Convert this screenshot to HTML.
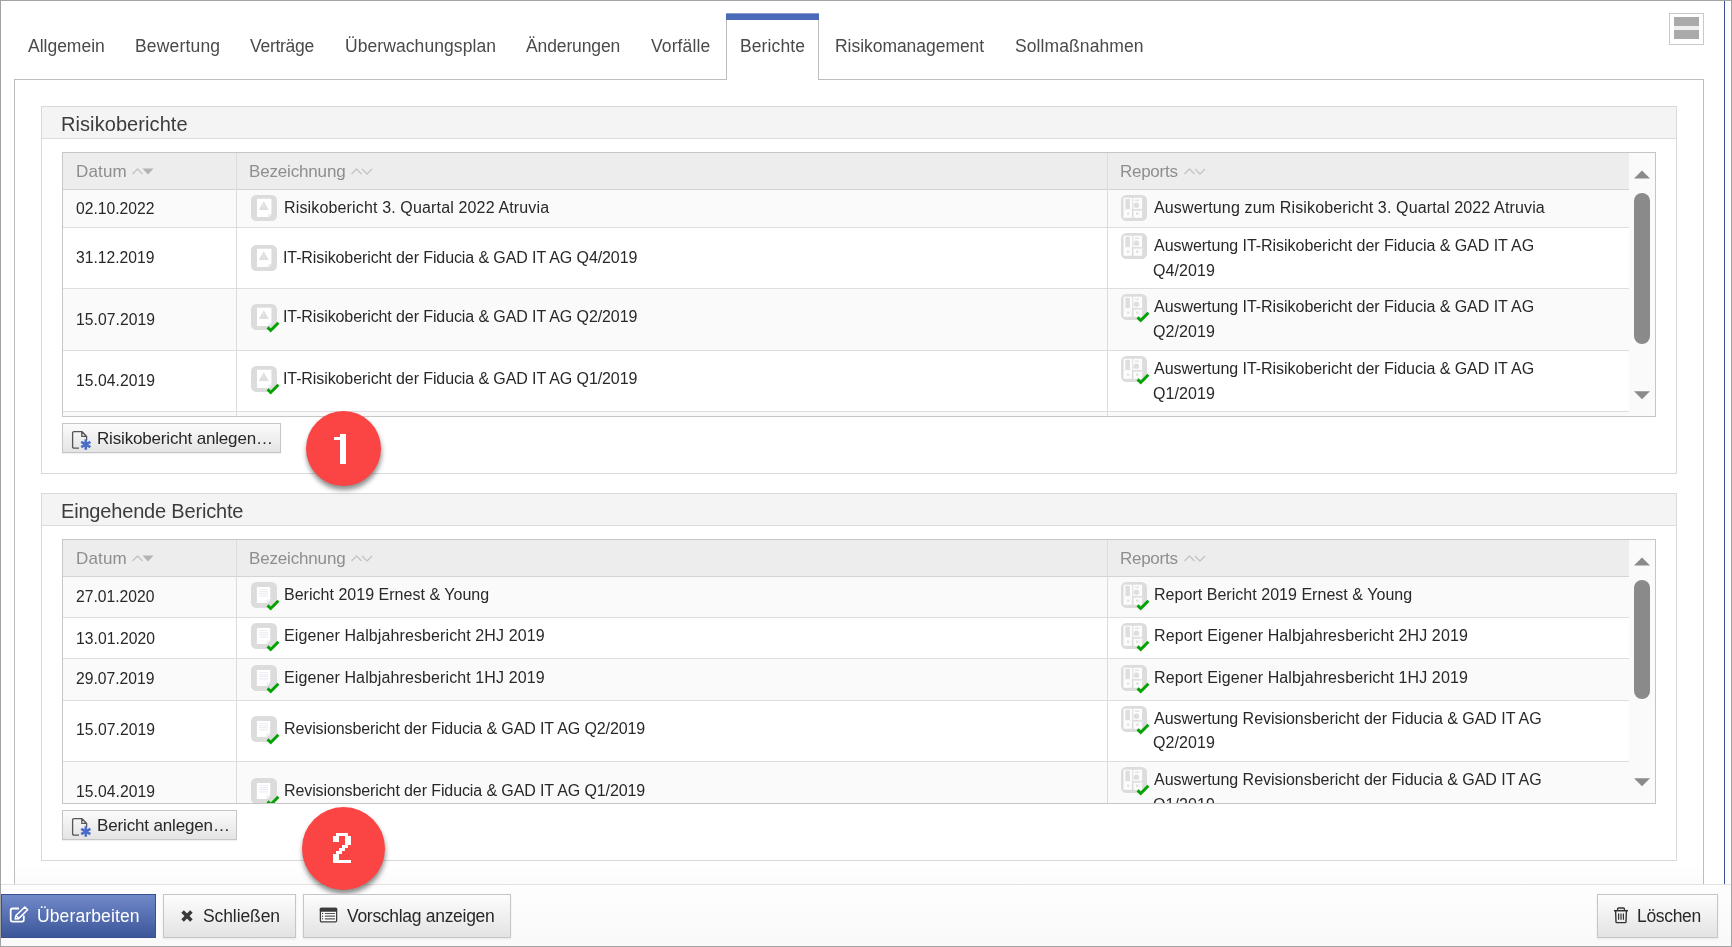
<!DOCTYPE html>
<html><head><meta charset="utf-8"><title>Berichte</title>
<style>
html,body{margin:0;padding:0;width:1732px;height:947px;overflow:hidden;background:#fff}
body{position:relative;font-family:"Liberation Sans",sans-serif}
.a{position:absolute}
.t{position:absolute;white-space:nowrap;will-change:transform}
</style></head><body>
<div class="a" style="left:0px;top:0px;width:1732px;height:947px;background:#fff"></div>
<div class="a" style="left:1px;top:885px;width:1730px;height:61px;background:linear-gradient(#fefefe,#f9f9f9)"></div>
<div class="a" style="left:15px;top:864px;width:1688px;height:20px;background:linear-gradient(#fff,#fbfbfb)"></div>
<div class="a" style="left:1px;top:884px;width:1730px;height:1px;background:#e2e2e2"></div>
<div class="a" style="left:14px;top:79px;width:1px;height:805px;background:#bdbdbd"></div>
<div class="a" style="left:1703px;top:79px;width:1px;height:805px;background:#bdbdbd"></div>
<div class="a" style="left:14px;top:79px;width:712px;height:1px;background:#bdbdbd"></div>
<div class="a" style="left:819px;top:79px;width:885px;height:1px;background:#bdbdbd"></div>
<div class="a" style="left:726px;top:13px;width:1px;height:67px;background:#bdbdbd"></div>
<div class="a" style="left:818px;top:13px;width:1px;height:67px;background:#bdbdbd"></div>
<div class="a" style="left:726px;top:13px;width:93px;height:1px;background:#8c9cc8"></div>
<div class="a" style="left:726px;top:14px;width:93px;height:6px;background:#4b6ab7"></div>
<div class="a" style="left:1724px;top:1px;width:1px;height:883px;background:#3b5096"></div>
<div class="a" style="left:0px;top:0px;width:1732px;height:1px;background:#a3a3a3"></div>
<div class="a" style="left:0px;top:0px;width:1px;height:947px;background:#a3a3a3"></div>
<div class="a" style="left:1731px;top:0px;width:1px;height:947px;background:#a3a3a3"></div>
<div class="a" style="left:0px;top:946px;width:1732px;height:1px;background:#a3a3a3"></div>
<div class="a" style="left:1669px;top:13px;width:35px;height:32px;border:1px solid #c9c9c9;box-sizing:border-box;background:#fff"></div>
<div class="a" style="left:1674px;top:17px;width:25px;height:9px;background:#aaa"></div>
<div class="a" style="left:1674px;top:26px;width:25px;height:4px;background:#efefef"></div>
<div class="a" style="left:1674px;top:30px;width:25px;height:9px;background:#aaa"></div>
<div class="t" style="left:28.20px;top:37.89px;font-size:17.5px;line-height:17.5px;letter-spacing:-0.009px;color:#4a4a4a;">Allgemein</div>
<div class="t" style="left:134.90px;top:37.89px;font-size:17.5px;line-height:17.5px;letter-spacing:0.175px;color:#4a4a4a;">Bewertung</div>
<div class="t" style="left:250.42px;top:37.89px;font-size:17.5px;line-height:17.5px;letter-spacing:-0.268px;color:#4a4a4a;">Verträge</div>
<div class="t" style="left:344.80px;top:37.89px;font-size:17.5px;line-height:17.5px;letter-spacing:0.077px;color:#4a4a4a;">Überwachungsplan</div>
<div class="t" style="left:526.30px;top:37.89px;font-size:17.5px;line-height:17.5px;letter-spacing:-0.117px;color:#4a4a4a;">Änderungen</div>
<div class="t" style="left:650.83px;top:37.89px;font-size:17.5px;line-height:17.5px;letter-spacing:0.114px;color:#4a4a4a;">Vorfälle</div>
<div class="t" style="left:740.10px;top:37.89px;font-size:17.5px;line-height:17.5px;letter-spacing:0.107px;color:#4a4a4a;">Berichte</div>
<div class="t" style="left:834.90px;top:37.89px;font-size:17.5px;line-height:17.5px;letter-spacing:-0.042px;color:#4a4a4a;">Risikomanagement</div>
<div class="t" style="left:1015.02px;top:37.89px;font-size:17.5px;line-height:17.5px;letter-spacing:0.094px;color:#4a4a4a;">Sollmaßnahmen</div>
<div class="a" style="left:41px;top:106px;width:1636px;height:368px;border:1px solid #d9d9d9;box-sizing:border-box"></div>
<div class="a" style="left:42px;top:107px;width:1634px;height:31px;background:#f4f4f4"></div>
<div class="a" style="left:42px;top:138px;width:1634px;height:1px;background:#dcdcdc"></div>
<div class="t" style="left:61.30px;top:113.97px;font-size:20px;line-height:20px;letter-spacing:0.077px;color:#3c3c3c;">Risikoberichte</div>
<div class="a" style="left:62px;top:152px;width:1594px;height:265px;border:1px solid #c6c6c6;box-sizing:border-box;background:#fff;overflow:hidden"></div>
<div class="a" style="left:63px;top:153px;width:1566px;height:36px;background:#ededed"></div>
<div class="a" style="left:63px;top:189px;width:1566px;height:1px;background:#d4d4d4"></div>
<div class="a" style="left:1629px;top:153px;width:26px;height:263px;background:#fafafa"></div>
<div class="t" style="left:75.74px;top:163.11px;font-size:17px;line-height:17px;letter-spacing:0.150px;color:#8e8e8e;">Datum</div>
<svg class="a" style="left:131.7px;top:168px" width="24" height="8" viewBox="0 0 24 8"><path d="M0.5 6 L5.5 1 L10.5 6" fill="none" stroke="#c4c4c4" stroke-width="1.4"/><path d="M10.5 0.5 H21.5 L16 6.5 Z" fill="#b3b3b3"/></svg>
<div class="t" style="left:249.44px;top:163.11px;font-size:17px;line-height:17px;letter-spacing:-0.168px;color:#8e8e8e;">Bezeichnung</div>
<svg class="a" style="left:351.2px;top:168px" width="24" height="8" viewBox="0 0 24 8"><path d="M0.5 6 L5.5 1 L10.5 6" fill="none" stroke="#c4c4c4" stroke-width="1.4"/><path d="M11 1 L16 6 L21 1" fill="none" stroke="#c4c4c4" stroke-width="1.4"/></svg>
<div class="t" style="left:1120.04px;top:163.11px;font-size:17px;line-height:17px;letter-spacing:-0.272px;color:#8e8e8e;">Reports</div>
<svg class="a" style="left:1184.3px;top:168px" width="24" height="8" viewBox="0 0 24 8"><path d="M0.5 6 L5.5 1 L10.5 6" fill="none" stroke="#c4c4c4" stroke-width="1.4"/><path d="M11 1 L16 6 L21 1" fill="none" stroke="#c4c4c4" stroke-width="1.4"/></svg>
<div class="a" style="left:0;top:0;width:1732px;height:947px;clip-path:inset(190px 0 531px 0)">
<div class="a" style="left:63px;top:190px;width:1566px;height:37px;background:#fafafa"></div>
<div class="a" style="left:63px;top:227px;width:1566px;height:1px;background:#dedede"></div>
<div class="a" style="left:63px;top:288px;width:1566px;height:1px;background:#dedede"></div>
<div class="a" style="left:63px;top:289px;width:1566px;height:61px;background:#fafafa"></div>
<div class="a" style="left:63px;top:350px;width:1566px;height:1px;background:#dedede"></div>
<div class="a" style="left:63px;top:411px;width:1566px;height:1px;background:#dedede"></div>
<div class="a" style="left:63px;top:412px;width:1566px;height:4px;background:#fafafa"></div>
<div class="t" style="left:76.17px;top:201.01px;font-size:15.7px;line-height:15.7px;letter-spacing:0.001px;color:#282828;">02.10.2022</div>
<svg class="a" style="left:251px;top:195px" width="30" height="30" viewBox="0 0 30 30">
<rect x="0" y="0" width="26" height="26" rx="5.5" fill="#dcdcdc"/>
<path d="M6 3.8 H20.4 V19.5 L17.8 22.1 H6 Z" fill="#fff"/>
<path d="M17.8 22.1 V19.5 H20.4" fill="none" stroke="#e4e4e4" stroke-width="0.8"/>
<path d="M12.8 6.2 L17.8 15 H7.8 Z" fill="#dedede"/>
<path d="M12.8 9 V12.5" stroke="#ececec" stroke-width="1"/>

</svg>
<div class="t" style="left:283.52px;top:199.86px;font-size:16px;line-height:16px;letter-spacing:0.150px;color:#282828;">Risikobericht 3. Quartal 2022 Atruvia</div>
<svg class="a" style="left:1121px;top:195px" width="30" height="30" viewBox="0 0 30 30">
<rect x="0" y="0" width="26" height="26" rx="5.5" fill="#dcdcdc"/>
<rect x="2.5" y="2.7" width="8.8" height="12.1" fill="#fcfcfc"/><rect x="12.3" y="2.7" width="8.8" height="11.3" fill="#fcfcfc"/>
<rect x="2.5" y="14.8" width="8.4" height="8" fill="#fcfcfc"/><rect x="12.5" y="15.6" width="8.6" height="7.2" fill="#fcfcfc"/>
<rect x="4.4" y="3.9" width="4.5" height="10.1" fill="#dedede"/><circle cx="15.4" cy="10.3" r="2.7" fill="#dedede"/>
<rect x="13.9" y="4.5" width="4.1" height="1.5" fill="#e4e4e4"/>
<rect x="6" y="17.5" width="2.2" height="2.3" fill="#e2e2e2"/><rect x="15" y="17.5" width="2.6" height="2.3" fill="#e2e2e2"/>
<path d="M17.7 13.3 L23 16.5" stroke="#eaeaea" stroke-width="0.8"/>

</svg>
<div class="t" style="left:1153.90px;top:199.76px;font-size:16px;line-height:16px;letter-spacing:0.146px;color:#282828;">Auswertung zum Risikobericht 3. Quartal 2022 Atruvia</div>
<div class="t" style="left:76.17px;top:250.01px;font-size:15.7px;line-height:15.7px;letter-spacing:-0.016px;color:#282828;">31.12.2019</div>
<svg class="a" style="left:251px;top:245px" width="30" height="30" viewBox="0 0 30 30">
<rect x="0" y="0" width="26" height="26" rx="5.5" fill="#dcdcdc"/>
<path d="M6 3.8 H20.4 V19.5 L17.8 22.1 H6 Z" fill="#fff"/>
<path d="M17.8 22.1 V19.5 H20.4" fill="none" stroke="#e4e4e4" stroke-width="0.8"/>
<path d="M12.8 6.2 L17.8 15 H7.8 Z" fill="#dedede"/>
<path d="M12.8 9 V12.5" stroke="#ececec" stroke-width="1"/>

</svg>
<div class="t" style="left:283.36px;top:250.36px;font-size:16px;line-height:16px;letter-spacing:-0.098px;color:#282828;">IT-Risikobericht der Fiducia &amp; GAD IT AG Q4/2019</div>
<svg class="a" style="left:1121px;top:233px" width="30" height="30" viewBox="0 0 30 30">
<rect x="0" y="0" width="26" height="26" rx="5.5" fill="#dcdcdc"/>
<rect x="2.5" y="2.7" width="8.8" height="12.1" fill="#fcfcfc"/><rect x="12.3" y="2.7" width="8.8" height="11.3" fill="#fcfcfc"/>
<rect x="2.5" y="14.8" width="8.4" height="8" fill="#fcfcfc"/><rect x="12.5" y="15.6" width="8.6" height="7.2" fill="#fcfcfc"/>
<rect x="4.4" y="3.9" width="4.5" height="10.1" fill="#dedede"/><circle cx="15.4" cy="10.3" r="2.7" fill="#dedede"/>
<rect x="13.9" y="4.5" width="4.1" height="1.5" fill="#e4e4e4"/>
<rect x="6" y="17.5" width="2.2" height="2.3" fill="#e2e2e2"/><rect x="15" y="17.5" width="2.6" height="2.3" fill="#e2e2e2"/>
<path d="M17.7 13.3 L23 16.5" stroke="#eaeaea" stroke-width="0.8"/>

</svg>
<div class="t" style="left:1153.90px;top:237.76px;font-size:16px;line-height:16px;letter-spacing:-0.039px;color:#282828;">Auswertung IT-Risikobericht der Fiducia &amp; GAD IT AG</div>
<div class="t" style="left:1153.10px;top:262.56px;font-size:16px;line-height:16px;letter-spacing:0.077px;color:#282828;">Q4/2019</div>
<div class="t" style="left:75.54px;top:311.81px;font-size:15.7px;line-height:15.7px;letter-spacing:0.054px;color:#282828;">15.07.2019</div>
<svg class="a" style="left:251px;top:304px" width="30" height="30" viewBox="0 0 30 30">
<rect x="0" y="0" width="26" height="26" rx="5.5" fill="#dcdcdc"/>
<path d="M6 3.8 H20.4 V19.5 L17.8 22.1 H6 Z" fill="#fff"/>
<path d="M17.8 22.1 V19.5 H20.4" fill="none" stroke="#e4e4e4" stroke-width="0.8"/>
<path d="M12.8 6.2 L17.8 15 H7.8 Z" fill="#dedede"/>
<path d="M12.8 9 V12.5" stroke="#ececec" stroke-width="1"/>
<path d="M16.6 23.4 L19.7 26.5 L27.4 18.8" fill="none" stroke="#00a300" stroke-width="2.9"/>
</svg>
<div class="t" style="left:283.36px;top:309.16px;font-size:16px;line-height:16px;letter-spacing:-0.098px;color:#282828;">IT-Risikobericht der Fiducia &amp; GAD IT AG Q2/2019</div>
<svg class="a" style="left:1121px;top:294px" width="30" height="30" viewBox="0 0 30 30">
<rect x="0" y="0" width="26" height="26" rx="5.5" fill="#dcdcdc"/>
<rect x="2.5" y="2.7" width="8.8" height="12.1" fill="#fcfcfc"/><rect x="12.3" y="2.7" width="8.8" height="11.3" fill="#fcfcfc"/>
<rect x="2.5" y="14.8" width="8.4" height="8" fill="#fcfcfc"/><rect x="12.5" y="15.6" width="8.6" height="7.2" fill="#fcfcfc"/>
<rect x="4.4" y="3.9" width="4.5" height="10.1" fill="#dedede"/><circle cx="15.4" cy="10.3" r="2.7" fill="#dedede"/>
<rect x="13.9" y="4.5" width="4.1" height="1.5" fill="#e4e4e4"/>
<rect x="6" y="17.5" width="2.2" height="2.3" fill="#e2e2e2"/><rect x="15" y="17.5" width="2.6" height="2.3" fill="#e2e2e2"/>
<path d="M17.7 13.3 L23 16.5" stroke="#eaeaea" stroke-width="0.8"/>
<path d="M16.6 23.4 L19.7 26.5 L27.4 18.8" fill="none" stroke="#00a300" stroke-width="2.9"/>
</svg>
<div class="t" style="left:1153.90px;top:299.26px;font-size:16px;line-height:16px;letter-spacing:-0.039px;color:#282828;">Auswertung IT-Risikobericht der Fiducia &amp; GAD IT AG</div>
<div class="t" style="left:1153.10px;top:324.06px;font-size:16px;line-height:16px;letter-spacing:0.077px;color:#282828;">Q2/2019</div>
<div class="t" style="left:75.54px;top:372.71px;font-size:15.7px;line-height:15.7px;letter-spacing:0.054px;color:#282828;">15.04.2019</div>
<svg class="a" style="left:251px;top:366px" width="30" height="30" viewBox="0 0 30 30">
<rect x="0" y="0" width="26" height="26" rx="5.5" fill="#dcdcdc"/>
<path d="M6 3.8 H20.4 V19.5 L17.8 22.1 H6 Z" fill="#fff"/>
<path d="M17.8 22.1 V19.5 H20.4" fill="none" stroke="#e4e4e4" stroke-width="0.8"/>
<path d="M12.8 6.2 L17.8 15 H7.8 Z" fill="#dedede"/>
<path d="M12.8 9 V12.5" stroke="#ececec" stroke-width="1"/>
<path d="M16.6 23.4 L19.7 26.5 L27.4 18.8" fill="none" stroke="#00a300" stroke-width="2.9"/>
</svg>
<div class="t" style="left:283.36px;top:371.06px;font-size:16px;line-height:16px;letter-spacing:-0.098px;color:#282828;">IT-Risikobericht der Fiducia &amp; GAD IT AG Q1/2019</div>
<svg class="a" style="left:1121px;top:356px" width="30" height="30" viewBox="0 0 30 30">
<rect x="0" y="0" width="26" height="26" rx="5.5" fill="#dcdcdc"/>
<rect x="2.5" y="2.7" width="8.8" height="12.1" fill="#fcfcfc"/><rect x="12.3" y="2.7" width="8.8" height="11.3" fill="#fcfcfc"/>
<rect x="2.5" y="14.8" width="8.4" height="8" fill="#fcfcfc"/><rect x="12.5" y="15.6" width="8.6" height="7.2" fill="#fcfcfc"/>
<rect x="4.4" y="3.9" width="4.5" height="10.1" fill="#dedede"/><circle cx="15.4" cy="10.3" r="2.7" fill="#dedede"/>
<rect x="13.9" y="4.5" width="4.1" height="1.5" fill="#e4e4e4"/>
<rect x="6" y="17.5" width="2.2" height="2.3" fill="#e2e2e2"/><rect x="15" y="17.5" width="2.6" height="2.3" fill="#e2e2e2"/>
<path d="M17.7 13.3 L23 16.5" stroke="#eaeaea" stroke-width="0.8"/>
<path d="M16.6 23.4 L19.7 26.5 L27.4 18.8" fill="none" stroke="#00a300" stroke-width="2.9"/>
</svg>
<div class="t" style="left:1153.90px;top:361.16px;font-size:16px;line-height:16px;letter-spacing:-0.039px;color:#282828;">Auswertung IT-Risikobericht der Fiducia &amp; GAD IT AG</div>
<div class="t" style="left:1153.10px;top:385.96px;font-size:16px;line-height:16px;letter-spacing:0.077px;color:#282828;">Q1/2019</div>
</div>
<div class="a" style="left:236px;top:153px;width:1px;height:263px;background:#dcdcdc"></div>
<div class="a" style="left:1107px;top:153px;width:1px;height:263px;background:#dcdcdc"></div>
<svg class="a" style="left:1634px;top:169.5px" width="16" height="9" viewBox="0 0 16 9"><path d="M0 8.5 L8 0.5 L16 8.5 Z" fill="#8a8a8a"/></svg>
<svg class="a" style="left:1634px;top:390.7px" width="16" height="9" viewBox="0 0 16 9"><path d="M0 0.3 L8 8.3 L16 0.3 Z" fill="#8a8a8a"/></svg>
<div class="a" style="left:1634px;top:193px;width:16px;height:151px;background:#8a8a8a;border-radius:8px"></div>
<div class="a" style="left:41px;top:493px;width:1636px;height:368px;border:1px solid #d9d9d9;box-sizing:border-box"></div>
<div class="a" style="left:42px;top:494px;width:1634px;height:31px;background:#f4f4f4"></div>
<div class="a" style="left:42px;top:525px;width:1634px;height:1px;background:#dcdcdc"></div>
<div class="t" style="left:61.30px;top:500.97px;font-size:20px;line-height:20px;letter-spacing:-0.178px;color:#3c3c3c;">Eingehende Berichte</div>
<div class="a" style="left:62px;top:539px;width:1594px;height:265px;border:1px solid #c6c6c6;box-sizing:border-box;background:#fff;overflow:hidden"></div>
<div class="a" style="left:63px;top:540px;width:1566px;height:36px;background:#ededed"></div>
<div class="a" style="left:63px;top:576px;width:1566px;height:1px;background:#d4d4d4"></div>
<div class="a" style="left:1629px;top:540px;width:26px;height:263px;background:#fafafa"></div>
<div class="t" style="left:75.74px;top:550.11px;font-size:17px;line-height:17px;letter-spacing:0.150px;color:#8e8e8e;">Datum</div>
<svg class="a" style="left:131.7px;top:555px" width="24" height="8" viewBox="0 0 24 8"><path d="M0.5 6 L5.5 1 L10.5 6" fill="none" stroke="#c4c4c4" stroke-width="1.4"/><path d="M10.5 0.5 H21.5 L16 6.5 Z" fill="#b3b3b3"/></svg>
<div class="t" style="left:249.44px;top:550.11px;font-size:17px;line-height:17px;letter-spacing:-0.168px;color:#8e8e8e;">Bezeichnung</div>
<svg class="a" style="left:351.2px;top:555px" width="24" height="8" viewBox="0 0 24 8"><path d="M0.5 6 L5.5 1 L10.5 6" fill="none" stroke="#c4c4c4" stroke-width="1.4"/><path d="M11 1 L16 6 L21 1" fill="none" stroke="#c4c4c4" stroke-width="1.4"/></svg>
<div class="t" style="left:1120.04px;top:550.11px;font-size:17px;line-height:17px;letter-spacing:-0.272px;color:#8e8e8e;">Reports</div>
<svg class="a" style="left:1184.3px;top:555px" width="24" height="8" viewBox="0 0 24 8"><path d="M0.5 6 L5.5 1 L10.5 6" fill="none" stroke="#c4c4c4" stroke-width="1.4"/><path d="M11 1 L16 6 L21 1" fill="none" stroke="#c4c4c4" stroke-width="1.4"/></svg>
<div class="a" style="left:0;top:0;width:1732px;height:947px;clip-path:inset(577px 0 144px 0)">
<div class="a" style="left:63px;top:577px;width:1566px;height:40px;background:#fafafa"></div>
<div class="a" style="left:63px;top:617px;width:1566px;height:1px;background:#dedede"></div>
<div class="a" style="left:63px;top:658px;width:1566px;height:1px;background:#dedede"></div>
<div class="a" style="left:63px;top:659px;width:1566px;height:41px;background:#fafafa"></div>
<div class="a" style="left:63px;top:700px;width:1566px;height:1px;background:#dedede"></div>
<div class="a" style="left:63px;top:761px;width:1566px;height:1px;background:#dedede"></div>
<div class="a" style="left:63px;top:762px;width:1566px;height:41px;background:#fafafa"></div>
<div class="t" style="left:76.02px;top:589.31px;font-size:15.7px;line-height:15.7px;letter-spacing:0.001px;color:#282828;">27.01.2020</div>
<svg class="a" style="left:251px;top:582px" width="30" height="30" viewBox="0 0 30 30">
<rect x="0" y="0" width="26" height="26" rx="5.5" fill="#dcdcdc"/>
<path d="M5.9 4.9 H19.2 V18 L16.2 21 H5.9 Z" fill="#fff"/>
<path d="M16.2 21 V18 H19.2" fill="none" stroke="#e6e6e6" stroke-width="0.8"/>
<path d="M8.2 7.5 H17 M8.2 9.6 H17 M8.2 11.7 H17 M8.2 13.8 H17" stroke="#eceef3" stroke-width="1.2"/>
<path d="M16.6 23.4 L19.7 26.5 L27.4 18.8" fill="none" stroke="#00a300" stroke-width="2.9"/>
</svg>
<div class="t" style="left:283.52px;top:586.76px;font-size:16px;line-height:16px;letter-spacing:0.022px;color:#282828;">Bericht 2019 Ernest &amp; Young</div>
<svg class="a" style="left:1121px;top:582px" width="30" height="30" viewBox="0 0 30 30">
<rect x="0" y="0" width="26" height="26" rx="5.5" fill="#dcdcdc"/>
<rect x="2.5" y="2.7" width="8.8" height="12.1" fill="#fcfcfc"/><rect x="12.3" y="2.7" width="8.8" height="11.3" fill="#fcfcfc"/>
<rect x="2.5" y="14.8" width="8.4" height="8" fill="#fcfcfc"/><rect x="12.5" y="15.6" width="8.6" height="7.2" fill="#fcfcfc"/>
<rect x="4.4" y="3.9" width="4.5" height="10.1" fill="#dedede"/><circle cx="15.4" cy="10.3" r="2.7" fill="#dedede"/>
<rect x="13.9" y="4.5" width="4.1" height="1.5" fill="#e4e4e4"/>
<rect x="6" y="17.5" width="2.2" height="2.3" fill="#e2e2e2"/><rect x="15" y="17.5" width="2.6" height="2.3" fill="#e2e2e2"/>
<path d="M17.7 13.3 L23 16.5" stroke="#eaeaea" stroke-width="0.8"/>
<path d="M16.6 23.4 L19.7 26.5 L27.4 18.8" fill="none" stroke="#00a300" stroke-width="2.9"/>
</svg>
<div class="t" style="left:1153.82px;top:586.86px;font-size:16px;line-height:16px;letter-spacing:0.033px;color:#282828;">Report Bericht 2019 Ernest &amp; Young</div>
<div class="t" style="left:75.54px;top:630.71px;font-size:15.7px;line-height:15.7px;letter-spacing:0.054px;color:#282828;">13.01.2020</div>
<svg class="a" style="left:251px;top:623px" width="30" height="30" viewBox="0 0 30 30">
<rect x="0" y="0" width="26" height="26" rx="5.5" fill="#dcdcdc"/>
<path d="M5.9 4.9 H19.2 V18 L16.2 21 H5.9 Z" fill="#fff"/>
<path d="M16.2 21 V18 H19.2" fill="none" stroke="#e6e6e6" stroke-width="0.8"/>
<path d="M8.2 7.5 H17 M8.2 9.6 H17 M8.2 11.7 H17 M8.2 13.8 H17" stroke="#eceef3" stroke-width="1.2"/>
<path d="M16.6 23.4 L19.7 26.5 L27.4 18.8" fill="none" stroke="#00a300" stroke-width="2.9"/>
</svg>
<div class="t" style="left:283.52px;top:628.16px;font-size:16px;line-height:16px;letter-spacing:0.108px;color:#282828;">Eigener Halbjahresbericht 2HJ 2019</div>
<svg class="a" style="left:1121px;top:623px" width="30" height="30" viewBox="0 0 30 30">
<rect x="0" y="0" width="26" height="26" rx="5.5" fill="#dcdcdc"/>
<rect x="2.5" y="2.7" width="8.8" height="12.1" fill="#fcfcfc"/><rect x="12.3" y="2.7" width="8.8" height="11.3" fill="#fcfcfc"/>
<rect x="2.5" y="14.8" width="8.4" height="8" fill="#fcfcfc"/><rect x="12.5" y="15.6" width="8.6" height="7.2" fill="#fcfcfc"/>
<rect x="4.4" y="3.9" width="4.5" height="10.1" fill="#dedede"/><circle cx="15.4" cy="10.3" r="2.7" fill="#dedede"/>
<rect x="13.9" y="4.5" width="4.1" height="1.5" fill="#e4e4e4"/>
<rect x="6" y="17.5" width="2.2" height="2.3" fill="#e2e2e2"/><rect x="15" y="17.5" width="2.6" height="2.3" fill="#e2e2e2"/>
<path d="M17.7 13.3 L23 16.5" stroke="#eaeaea" stroke-width="0.8"/>
<path d="M16.6 23.4 L19.7 26.5 L27.4 18.8" fill="none" stroke="#00a300" stroke-width="2.9"/>
</svg>
<div class="t" style="left:1153.82px;top:628.06px;font-size:16px;line-height:16px;letter-spacing:0.107px;color:#282828;">Report Eigener Halbjahresbericht 2HJ 2019</div>
<div class="t" style="left:76.02px;top:671.41px;font-size:15.7px;line-height:15.7px;letter-spacing:0.001px;color:#282828;">29.07.2019</div>
<svg class="a" style="left:251px;top:665px" width="30" height="30" viewBox="0 0 30 30">
<rect x="0" y="0" width="26" height="26" rx="5.5" fill="#dcdcdc"/>
<path d="M5.9 4.9 H19.2 V18 L16.2 21 H5.9 Z" fill="#fff"/>
<path d="M16.2 21 V18 H19.2" fill="none" stroke="#e6e6e6" stroke-width="0.8"/>
<path d="M8.2 7.5 H17 M8.2 9.6 H17 M8.2 11.7 H17 M8.2 13.8 H17" stroke="#eceef3" stroke-width="1.2"/>
<path d="M16.6 23.4 L19.7 26.5 L27.4 18.8" fill="none" stroke="#00a300" stroke-width="2.9"/>
</svg>
<div class="t" style="left:283.52px;top:669.86px;font-size:16px;line-height:16px;letter-spacing:0.108px;color:#282828;">Eigener Halbjahresbericht 1HJ 2019</div>
<svg class="a" style="left:1121px;top:665px" width="30" height="30" viewBox="0 0 30 30">
<rect x="0" y="0" width="26" height="26" rx="5.5" fill="#dcdcdc"/>
<rect x="2.5" y="2.7" width="8.8" height="12.1" fill="#fcfcfc"/><rect x="12.3" y="2.7" width="8.8" height="11.3" fill="#fcfcfc"/>
<rect x="2.5" y="14.8" width="8.4" height="8" fill="#fcfcfc"/><rect x="12.5" y="15.6" width="8.6" height="7.2" fill="#fcfcfc"/>
<rect x="4.4" y="3.9" width="4.5" height="10.1" fill="#dedede"/><circle cx="15.4" cy="10.3" r="2.7" fill="#dedede"/>
<rect x="13.9" y="4.5" width="4.1" height="1.5" fill="#e4e4e4"/>
<rect x="6" y="17.5" width="2.2" height="2.3" fill="#e2e2e2"/><rect x="15" y="17.5" width="2.6" height="2.3" fill="#e2e2e2"/>
<path d="M17.7 13.3 L23 16.5" stroke="#eaeaea" stroke-width="0.8"/>
<path d="M16.6 23.4 L19.7 26.5 L27.4 18.8" fill="none" stroke="#00a300" stroke-width="2.9"/>
</svg>
<div class="t" style="left:1153.82px;top:670.06px;font-size:16px;line-height:16px;letter-spacing:0.107px;color:#282828;">Report Eigener Halbjahresbericht 1HJ 2019</div>
<div class="t" style="left:75.54px;top:722.41px;font-size:15.7px;line-height:15.7px;letter-spacing:0.054px;color:#282828;">15.07.2019</div>
<svg class="a" style="left:251px;top:716px" width="30" height="30" viewBox="0 0 30 30">
<rect x="0" y="0" width="26" height="26" rx="5.5" fill="#dcdcdc"/>
<path d="M5.9 4.9 H19.2 V18 L16.2 21 H5.9 Z" fill="#fff"/>
<path d="M16.2 21 V18 H19.2" fill="none" stroke="#e6e6e6" stroke-width="0.8"/>
<path d="M8.2 7.5 H17 M8.2 9.6 H17 M8.2 11.7 H17 M8.2 13.8 H17" stroke="#eceef3" stroke-width="1.2"/>
<path d="M16.6 23.4 L19.7 26.5 L27.4 18.8" fill="none" stroke="#00a300" stroke-width="2.9"/>
</svg>
<div class="t" style="left:283.52px;top:720.86px;font-size:16px;line-height:16px;letter-spacing:-0.104px;color:#282828;">Revisionsbericht der Fiducia &amp; GAD IT AG Q2/2019</div>
<svg class="a" style="left:1121px;top:706px" width="30" height="30" viewBox="0 0 30 30">
<rect x="0" y="0" width="26" height="26" rx="5.5" fill="#dcdcdc"/>
<rect x="2.5" y="2.7" width="8.8" height="12.1" fill="#fcfcfc"/><rect x="12.3" y="2.7" width="8.8" height="11.3" fill="#fcfcfc"/>
<rect x="2.5" y="14.8" width="8.4" height="8" fill="#fcfcfc"/><rect x="12.5" y="15.6" width="8.6" height="7.2" fill="#fcfcfc"/>
<rect x="4.4" y="3.9" width="4.5" height="10.1" fill="#dedede"/><circle cx="15.4" cy="10.3" r="2.7" fill="#dedede"/>
<rect x="13.9" y="4.5" width="4.1" height="1.5" fill="#e4e4e4"/>
<rect x="6" y="17.5" width="2.2" height="2.3" fill="#e2e2e2"/><rect x="15" y="17.5" width="2.6" height="2.3" fill="#e2e2e2"/>
<path d="M17.7 13.3 L23 16.5" stroke="#eaeaea" stroke-width="0.8"/>
<path d="M16.6 23.4 L19.7 26.5 L27.4 18.8" fill="none" stroke="#00a300" stroke-width="2.9"/>
</svg>
<div class="t" style="left:1153.90px;top:710.66px;font-size:16px;line-height:16px;letter-spacing:-0.030px;color:#282828;">Auswertung Revisionsbericht der Fiducia &amp; GAD IT AG</div>
<div class="t" style="left:1153.10px;top:735.46px;font-size:16px;line-height:16px;letter-spacing:0.077px;color:#282828;">Q2/2019</div>
<div class="t" style="left:75.54px;top:784.11px;font-size:15.7px;line-height:15.7px;letter-spacing:0.054px;color:#282828;">15.04.2019</div>
<svg class="a" style="left:251px;top:778px" width="30" height="30" viewBox="0 0 30 30">
<rect x="0" y="0" width="26" height="26" rx="5.5" fill="#dcdcdc"/>
<path d="M5.9 4.9 H19.2 V18 L16.2 21 H5.9 Z" fill="#fff"/>
<path d="M16.2 21 V18 H19.2" fill="none" stroke="#e6e6e6" stroke-width="0.8"/>
<path d="M8.2 7.5 H17 M8.2 9.6 H17 M8.2 11.7 H17 M8.2 13.8 H17" stroke="#eceef3" stroke-width="1.2"/>
<path d="M16.6 23.4 L19.7 26.5 L27.4 18.8" fill="none" stroke="#00a300" stroke-width="2.9"/>
</svg>
<div class="t" style="left:283.52px;top:782.56px;font-size:16px;line-height:16px;letter-spacing:-0.104px;color:#282828;">Revisionsbericht der Fiducia &amp; GAD IT AG Q1/2019</div>
<svg class="a" style="left:1121px;top:767px" width="30" height="30" viewBox="0 0 30 30">
<rect x="0" y="0" width="26" height="26" rx="5.5" fill="#dcdcdc"/>
<rect x="2.5" y="2.7" width="8.8" height="12.1" fill="#fcfcfc"/><rect x="12.3" y="2.7" width="8.8" height="11.3" fill="#fcfcfc"/>
<rect x="2.5" y="14.8" width="8.4" height="8" fill="#fcfcfc"/><rect x="12.5" y="15.6" width="8.6" height="7.2" fill="#fcfcfc"/>
<rect x="4.4" y="3.9" width="4.5" height="10.1" fill="#dedede"/><circle cx="15.4" cy="10.3" r="2.7" fill="#dedede"/>
<rect x="13.9" y="4.5" width="4.1" height="1.5" fill="#e4e4e4"/>
<rect x="6" y="17.5" width="2.2" height="2.3" fill="#e2e2e2"/><rect x="15" y="17.5" width="2.6" height="2.3" fill="#e2e2e2"/>
<path d="M17.7 13.3 L23 16.5" stroke="#eaeaea" stroke-width="0.8"/>
<path d="M16.6 23.4 L19.7 26.5 L27.4 18.8" fill="none" stroke="#00a300" stroke-width="2.9"/>
</svg>
<div class="t" style="left:1153.90px;top:771.76px;font-size:16px;line-height:16px;letter-spacing:-0.030px;color:#282828;">Auswertung Revisionsbericht der Fiducia &amp; GAD IT AG</div>
<div class="t" style="left:1153.10px;top:796.56px;font-size:16px;line-height:16px;letter-spacing:0.077px;color:#282828;">Q1/2019</div>
</div>
<div class="a" style="left:236px;top:540px;width:1px;height:263px;background:#dcdcdc"></div>
<div class="a" style="left:1107px;top:540px;width:1px;height:263px;background:#dcdcdc"></div>
<svg class="a" style="left:1634px;top:556.5px" width="16" height="9" viewBox="0 0 16 9"><path d="M0 8.5 L8 0.5 L16 8.5 Z" fill="#8a8a8a"/></svg>
<svg class="a" style="left:1634px;top:777.7px" width="16" height="9" viewBox="0 0 16 9"><path d="M0 0.3 L8 8.3 L16 0.3 Z" fill="#8a8a8a"/></svg>
<div class="a" style="left:1634px;top:580px;width:16px;height:119px;background:#8a8a8a;border-radius:8px"></div>
<div class="a" style="left:62px;top:423px;width:219px;height:30px;border:1px solid #c6c6c6;box-sizing:border-box;background:linear-gradient(#fbfbfb,#e4e4e4);box-shadow:0 1px 1px rgba(0,0,0,0.06)"></div>
<svg class="a" style="left:70px;top:429px" width="24" height="24" viewBox="0 0 24 24"><path d="M9 19.2 H4 Q2.6 19.2 2.6 17.8 V4 Q2.6 2.6 4 2.6 H11.8 L16.6 7.4 V11" fill="none" stroke="#555" stroke-width="1.3"/><path d="M11.8 2.8 V7.4 H16.4 Z" fill="#fff" stroke="#555" stroke-width="1.3" stroke-linejoin="round"/><path d="M15.8 10.2 V20.8 M11.2 12.8 L20.4 18.2 M11.2 18.2 L20.4 12.8" stroke="#4a6dc6" stroke-width="2.6"/></svg>
<div class="t" style="left:97.44px;top:430.31px;font-size:17px;line-height:17px;letter-spacing:-0.170px;color:#282828;">Risikobericht anlegen…</div>
<div class="a" style="left:62px;top:810px;width:175px;height:30px;border:1px solid #c6c6c6;box-sizing:border-box;background:linear-gradient(#fbfbfb,#e4e4e4);box-shadow:0 1px 1px rgba(0,0,0,0.06)"></div>
<svg class="a" style="left:70px;top:816px" width="24" height="24" viewBox="0 0 24 24"><path d="M9 19.2 H4 Q2.6 19.2 2.6 17.8 V4 Q2.6 2.6 4 2.6 H11.8 L16.6 7.4 V11" fill="none" stroke="#555" stroke-width="1.3"/><path d="M11.8 2.8 V7.4 H16.4 Z" fill="#fff" stroke="#555" stroke-width="1.3" stroke-linejoin="round"/><path d="M15.8 10.2 V20.8 M11.2 12.8 L20.4 18.2 M11.2 18.2 L20.4 12.8" stroke="#4a6dc6" stroke-width="2.6"/></svg>
<div class="t" style="left:97.44px;top:817.11px;font-size:17px;line-height:17px;letter-spacing:-0.147px;color:#282828;">Bericht anlegen…</div>
<div class="a" style="left:306.0px;top:410.8px;width:75px;height:75px;border-radius:50%;background:#fb4444;box-shadow:0.5px 4px 5px rgba(0,0,0,0.45)"></div>
<svg class="a" style="left:0;top:0" width="1732" height="947" shape-rendering="crispEdges"><rect x="340" y="434" width="6" height="30" fill="#fff"/><rect x="334" y="437" width="6" height="3" fill="#fff"/></svg>
<div class="a" style="left:302.0px;top:806.5px;width:83px;height:83px;border-radius:50%;background:#fb4444;box-shadow:0.5px 4px 5px rgba(0,0,0,0.45)"></div>
<svg class="a" style="left:0;top:0" width="1732" height="947" shape-rendering="crispEdges"><rect x="336" y="833" width="12" height="3" fill="#fff"/><rect x="333" y="836" width="6" height="6" fill="#fff"/><rect x="345" y="836" width="6" height="9" fill="#fff"/><rect x="342" y="845" width="6" height="3" fill="#fff"/><rect x="339" y="848" width="6" height="3" fill="#fff"/><rect x="336" y="851" width="6" height="3" fill="#fff"/><rect x="333" y="854" width="6" height="6" fill="#fff"/><rect x="333" y="860" width="18" height="3" fill="#fff"/></svg>
<div class="a" style="left:1px;top:894px;width:155px;height:44px;border:1px solid #3a4f92;box-sizing:border-box;background:linear-gradient(#7189c9,#3b5699)"></div>
<svg class="a" style="left:8px;top:905px" width="22" height="19" viewBox="0 0 22 19"><path d="M11 3.5 H4.5 Q2.7 3.5 2.7 5.3 V14.8 Q2.7 16.6 4.5 16.6 H14 Q15.8 16.6 15.8 14.8 V10.5" fill="none" stroke="#fff" stroke-width="1.8"/><path d="M7.2 14 L7.8 10.8 L16.8 2 L19.6 4.8 L10.6 13.6 Z" fill="none" stroke="#fff" stroke-width="1.6" stroke-linejoin="round"/><path d="M8.5 11 L11 13.5" stroke="#fff" stroke-width="1.2"/></svg>
<div class="t" style="left:37.10px;top:907.89px;font-size:17.5px;line-height:17.5px;letter-spacing:0.118px;color:#fff;">Überarbeiten</div>
<div class="a" style="left:163px;top:894px;width:133px;height:44px;border:1px solid #c6c6c6;box-sizing:border-box;background:linear-gradient(#fdfdfd,#e3e3e3);box-shadow:0 1px 2px rgba(0,0,0,0.08)"></div>
<div class="t" style="left:202.93px;top:908.29px;font-size:17.5px;line-height:17.5px;letter-spacing:-0.097px;color:#282828;">Schließen</div>
<svg class="a" style="left:180px;top:909px" width="14" height="14" viewBox="0 0 14 14"><path d="M2.6 2.6 L11.4 11.4 M11.4 2.6 L2.6 11.4" stroke="#3a3a3a" stroke-width="3.6"/></svg>
<div class="a" style="left:303px;top:894px;width:208px;height:44px;border:1px solid #c6c6c6;box-sizing:border-box;background:linear-gradient(#fdfdfd,#e3e3e3);box-shadow:0 1px 2px rgba(0,0,0,0.08)"></div>
<div class="t" style="left:347.43px;top:908.29px;font-size:17.5px;line-height:17.5px;letter-spacing:-0.293px;color:#282828;">Vorschlag anzeigen</div>
<svg class="a" style="left:319px;top:907px" width="19" height="16" viewBox="0 0 19 16"><rect x="1.4" y="1.4" width="16.2" height="13.4" rx="1.2" fill="#fff" stroke="#3c3c3c" stroke-width="1.3"/><rect x="0.8" y="0.8" width="17.4" height="4" rx="1" fill="#3c3c3c"/><path d="M6.3 6.5 H15.6 M6.3 9.2 H15.6 M6.3 11.8 H15.6" stroke="#555" stroke-width="1.2" stroke-linecap="round"/><circle cx="3.6" cy="6.5" r="0.7" fill="#444"/><circle cx="3.6" cy="9.2" r="0.7" fill="#444"/><circle cx="3.6" cy="11.8" r="0.7" fill="#444"/></svg>
<div class="a" style="left:1597px;top:894px;width:121px;height:44px;border:1px solid #c6c6c6;box-sizing:border-box;background:linear-gradient(#fdfdfd,#e3e3e3);box-shadow:0 1px 2px rgba(0,0,0,0.08)"></div>
<div class="t" style="left:1637.10px;top:908.29px;font-size:17.5px;line-height:17.5px;letter-spacing:-0.333px;color:#282828;">Löschen</div>
<svg class="a" style="left:1613px;top:907px" width="16" height="17" viewBox="0 0 16 17"><path d="M1 3.7 H15" stroke="#333" stroke-width="1.5"/><path d="M4.6 3.5 V1.9 Q4.6 1 5.4 1 H10.6 Q11.4 1 11.4 1.9 V3.5" fill="none" stroke="#333" stroke-width="1.3"/><path d="M2.6 4 L3 14.8 Q3.1 15.6 3.9 15.6 H12.1 Q12.9 15.6 13 14.8 L13.4 4" fill="none" stroke="#333" stroke-width="1.4"/><path d="M5.6 6.6 V12.8 M8 6.6 V12.8 M10.4 6.6 V12.8" stroke="#333" stroke-width="1.2"/></svg>
</body></html>
